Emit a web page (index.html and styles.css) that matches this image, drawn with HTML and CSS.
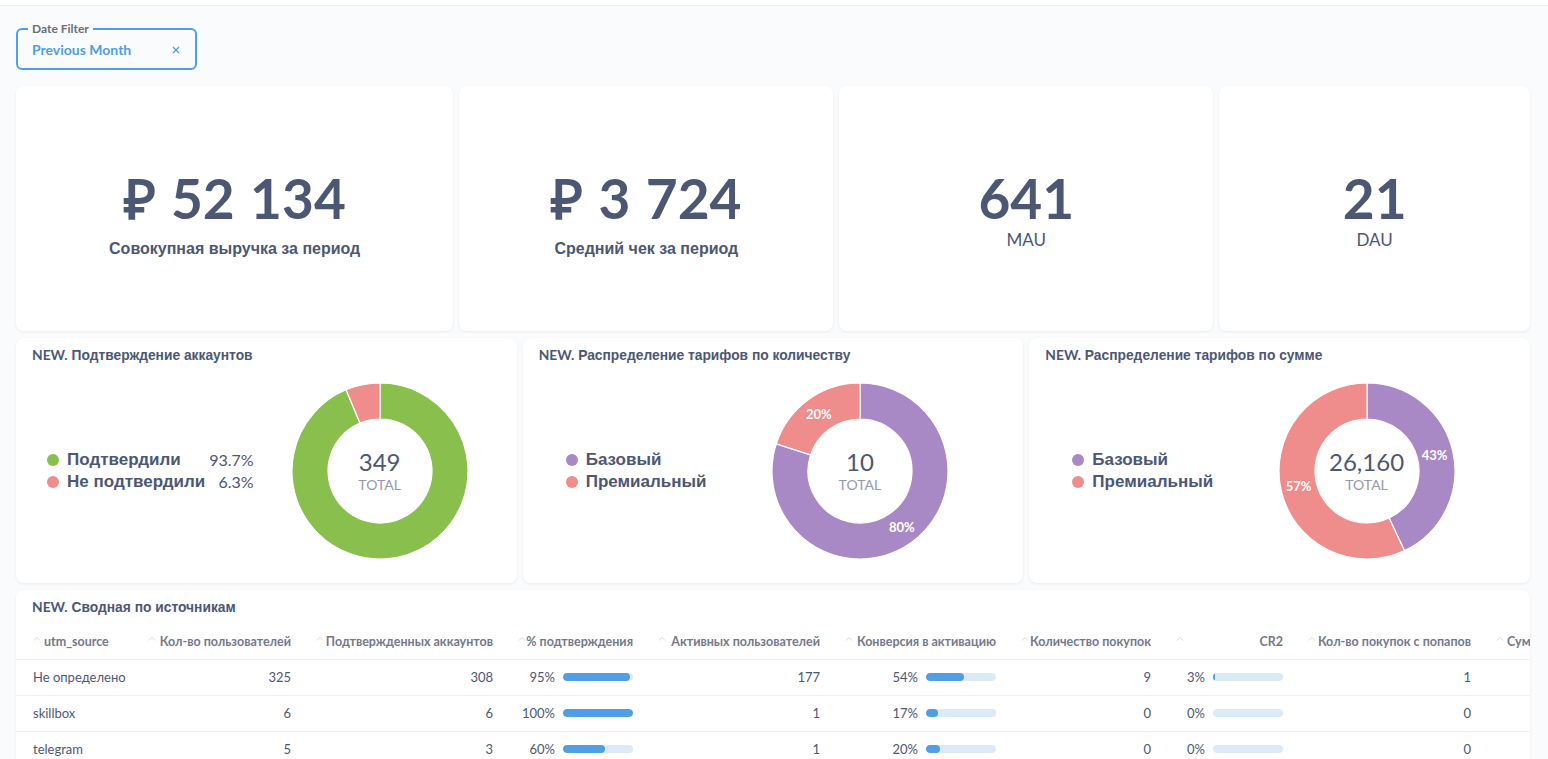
FILE: index.html
```html
<!DOCTYPE html>
<html lang="ru">
<head>
<meta charset="utf-8">
<title>Dashboard</title>
<link rel="stylesheet" href="styles.css">
</head>
<body>
<div class="topbar"></div>

<div class="filters">
  <fieldset class="filter">
    <legend class="filter-legend">Date Filter</legend>
    <div class="filter-row">
      <span class="filter-value">Previous Month</span>
      <svg class="filter-close" width="8" height="8" viewBox="0 0 8 8"><path d="M1 1 L7 7 M7 1 L1 7" stroke="#509ee3" stroke-width="1.3" fill="none"/></svg>
    </div>
  </fieldset>
</div>

<main class="dashboard">
  <section class="card scalar span-7">
    <div class="scalar-value">₽ 52 134</div>
    <div class="scalar-label scalar-label--ru">Совокупная выручка за период</div>
  </section>
  <section class="card scalar span-6">
    <div class="scalar-value">₽ 3 724</div>
    <div class="scalar-label scalar-label--ru">Средний чек за период</div>
  </section>
  <section class="card scalar span-6">
    <div class="scalar-value">641</div>
    <div class="scalar-label">MAU</div>
  </section>
  <section class="card scalar span-5">
    <div class="scalar-value">21</div>
    <div class="scalar-label">DAU</div>
  </section>

  <section class="card chart-card span-8">
    <h2 class="card-title"><span class="title-tag">NEW.</span> Подтверждение аккаунтов</h2>
    <div class="chart-body">
      <div class="legend legend--first">
        <span class="dot dot-green"></span><span class="legend-name">Подтвердили</span><span class="legend-pct">93.7%</span>
        <span class="dot dot-pink"></span><span class="legend-name">Не подтвердили</span><span class="legend-pct">6.3%</span>
      </div>
      <div class="chart-area">
        <div class="donut">
          <svg class="donut-svg" width="180" height="180" viewBox="0 0 180 180">
            <path d="M90 2 A88 88 0 1 1 56.07 8.80 L69.95 42.02 A52 52 0 1 0 90 38 Z" fill="#88bf4d" stroke="#fff" stroke-width="1.2"/>
            <path d="M56.07 8.80 A88 88 0 0 1 90 2 L90 38 A52 52 0 0 0 69.95 42.02 Z" fill="#ef8c8c" stroke="#fff" stroke-width="1.2"/>
          </svg>
          <div class="donut-center">
            <div class="donut-total">349</div>
            <div class="donut-caption">TOTAL</div>
          </div>
        </div>
      </div>
    </div>
  </section>

  <section class="card chart-card span-8">
    <h2 class="card-title"><span class="title-tag">NEW.</span> Распределение тарифов по количеству</h2>
    <div class="chart-body">
      <div class="legend">
        <span class="dot dot-purple"></span><span class="legend-name">Базовый</span><span class="legend-pct"></span>
        <span class="dot dot-pink"></span><span class="legend-name">Премиальный</span><span class="legend-pct"></span>
      </div>
      <div class="chart-area">
        <div class="donut">
          <svg class="donut-svg" width="180" height="180" viewBox="0 0 180 180">
            <path d="M90 2 A88 88 0 1 1 6.30 62.81 L40.54 73.93 A52 52 0 1 0 90 38 Z" fill="#a989c5" stroke="#fff" stroke-width="1.2"/>
            <path d="M6.30 62.81 A88 88 0 0 1 90 2 L90 38 A52 52 0 0 0 40.54 73.93 Z" fill="#ef8c8c" stroke="#fff" stroke-width="1.2"/>
          </svg>
          <div class="donut-center">
            <div class="donut-total">10</div>
            <div class="donut-caption">TOTAL</div>
          </div>
          <span class="slice-label" style="left:49px;top:33px">20%</span>
          <span class="slice-label" style="left:132px;top:146px">80%</span>
        </div>
      </div>
    </div>
  </section>

  <section class="card chart-card span-8">
    <h2 class="card-title"><span class="title-tag">NEW.</span> Распределение тарифов по сумме</h2>
    <div class="chart-body">
      <div class="legend">
        <span class="dot dot-purple"></span><span class="legend-name">Базовый</span><span class="legend-pct"></span>
        <span class="dot dot-pink"></span><span class="legend-name">Премиальный</span><span class="legend-pct"></span>
      </div>
      <div class="chart-area">
        <div class="donut">
          <svg class="donut-svg" width="180" height="180" viewBox="0 0 180 180">
            <path d="M90 2 A88 88 0 0 1 127.47 169.62 L112.14 137.05 A52 52 0 0 0 90 38 Z" fill="#a989c5" stroke="#fff" stroke-width="1.2"/>
            <path d="M127.47 169.62 A88 88 0 1 1 90 2 L90 38 A52 52 0 1 0 112.14 137.05 Z" fill="#ef8c8c" stroke="#fff" stroke-width="1.2"/>
          </svg>
          <div class="donut-center">
            <div class="donut-total">26,160</div>
            <div class="donut-caption">TOTAL</div>
          </div>
          <span class="slice-label" style="left:158px;top:74px">43%</span>
          <span class="slice-label" style="left:22px;top:105px">57%</span>
        </div>
      </div>
    </div>
  </section>

  <section class="card table-card span-24">
    <h2 class="card-title"><span class="title-tag">NEW.</span> Сводная по источникам</h2>
    <div class="table">
      <div class="tr th-row">
        <div class="th th-left"><svg class="caret" width="8" height="5" viewBox="0 0 8 5"><path d="M1 4.5 L4 1.5 L7 4.5" fill="none" stroke="#d3d7de" stroke-width="1"/></svg><span>utm_source</span></div>
        <div class="th"><svg class="caret" width="8" height="5" viewBox="0 0 8 5"><path d="M1 4.5 L4 1.5 L7 4.5" fill="none" stroke="#d3d7de" stroke-width="1"/></svg><span>Кол-во пользователей</span></div>
        <div class="th"><svg class="caret" width="8" height="5" viewBox="0 0 8 5"><path d="M1 4.5 L4 1.5 L7 4.5" fill="none" stroke="#d3d7de" stroke-width="1"/></svg><span>Подтвержденных аккаунтов</span></div>
        <div class="th"><svg class="caret" width="8" height="5" viewBox="0 0 8 5"><path d="M1 4.5 L4 1.5 L7 4.5" fill="none" stroke="#d3d7de" stroke-width="1"/></svg><span>% подтверждения</span></div>
        <div class="th"><svg class="caret" width="8" height="5" viewBox="0 0 8 5"><path d="M1 4.5 L4 1.5 L7 4.5" fill="none" stroke="#d3d7de" stroke-width="1"/></svg><span>Активных пользователей</span></div>
        <div class="th"><svg class="caret" width="8" height="5" viewBox="0 0 8 5"><path d="M1 4.5 L4 1.5 L7 4.5" fill="none" stroke="#d3d7de" stroke-width="1"/></svg><span>Конверсия в активацию</span></div>
        <div class="th"><svg class="caret" width="8" height="5" viewBox="0 0 8 5"><path d="M1 4.5 L4 1.5 L7 4.5" fill="none" stroke="#d3d7de" stroke-width="1"/></svg><span>Количество покупок</span></div>
        <div class="th"><svg class="caret" width="8" height="5" viewBox="0 0 8 5"><path d="M1 4.5 L4 1.5 L7 4.5" fill="none" stroke="#d3d7de" stroke-width="1"/></svg><span>CR2</span></div>
        <div class="th"><svg class="caret" width="8" height="5" viewBox="0 0 8 5"><path d="M1 4.5 L4 1.5 L7 4.5" fill="none" stroke="#d3d7de" stroke-width="1"/></svg><span>Кол-во покупок с попапов</span></div>
        <div class="th th-left"><svg class="caret" width="8" height="5" viewBox="0 0 8 5"><path d="M1 4.5 L4 1.5 L7 4.5" fill="none" stroke="#d3d7de" stroke-width="1"/></svg><span>Сум</span></div>
      </div>

      <div class="tr">
        <div class="td td-left">Не определено</div>
        <div class="td">325</div>
        <div class="td">308</div>
        <div class="td td-bar"><span>95%</span><span class="bar"><span class="bar-fill" style="width:95%"></span></span></div>
        <div class="td">177</div>
        <div class="td td-bar"><span>54%</span><span class="bar"><span class="bar-fill" style="width:54%"></span></span></div>
        <div class="td">9</div>
        <div class="td td-bar"><span>3%</span><span class="bar"><span class="bar-fill" style="width:3%"></span></span></div>
        <div class="td">1</div>
        <div class="td"></div>
      </div>

      <div class="tr">
        <div class="td td-left">skillbox</div>
        <div class="td">6</div>
        <div class="td">6</div>
        <div class="td td-bar"><span>100%</span><span class="bar"><span class="bar-fill" style="width:100%"></span></span></div>
        <div class="td">1</div>
        <div class="td td-bar"><span>17%</span><span class="bar"><span class="bar-fill" style="width:17%"></span></span></div>
        <div class="td">0</div>
        <div class="td td-bar"><span>0%</span><span class="bar"><span class="bar-fill" style="width:0%"></span></span></div>
        <div class="td">0</div>
        <div class="td"></div>
      </div>

      <div class="tr">
        <div class="td td-left">telegram</div>
        <div class="td">5</div>
        <div class="td">3</div>
        <div class="td td-bar"><span>60%</span><span class="bar"><span class="bar-fill" style="width:60%"></span></span></div>
        <div class="td">1</div>
        <div class="td td-bar"><span>20%</span><span class="bar"><span class="bar-fill" style="width:20%"></span></span></div>
        <div class="td">0</div>
        <div class="td td-bar"><span>0%</span><span class="bar"><span class="bar-fill" style="width:0%"></span></span></div>
        <div class="td">0</div>
        <div class="td"></div>
      </div>
    </div>
  </section>
</main>
</body>
</html>
```

FILE: styles.css
```css
* { box-sizing: border-box; }

html, body {
  margin: 0;
  padding: 0;
}

body {
  background: #f9fbfc;
  font-family: Lato, "Liberation Sans", sans-serif;
  color: #4c5773;
  overflow: hidden;
  height: 759px;
}

.topbar {
  height: 6px;
  background: #fff;
  border-bottom: 1px solid #eceef1;
}

.filters {
  padding: 16px 16px 0;
}

.filter {
  margin: 0;
  width: 181px;
  height: 48px;
  border: 2px solid #509ee3;
  border-radius: 6px;
  padding: 0 14px;
  min-width: 0;
}

.filter-legend {
  padding: 0 4px;
  margin-left: -4px;
  font-size: 12px;
  line-height: 14px;
  font-weight: 700;
  color: #696e7b;
}

.filter-row {
  display: flex;
  align-items: center;
  justify-content: space-between;
  padding: 4px 1px 0 0;
  height: 24px;
}

.filter-value {
  font-size: 14px;
  font-weight: 700;
  color: #509ee3;
  line-height: 18px;
}

.filter-close {
  display: block;
}

.dashboard {
  display: grid;
  grid-template-columns: repeat(24, minmax(0, 1fr));
  grid-template-rows: 245px 245px 300px;
  column-gap: 6px;
  row-gap: 7px;
  padding: 0 18px 0 16px;
  margin-top: 16px;
}

.span-5 { grid-column: span 5; }
.span-6 { grid-column: span 6; }
.span-7 { grid-column: span 7; }
.span-8 { grid-column: span 8; }
.span-24 { grid-column: span 24; }

.card {
  background: #fff;
  border-radius: 8px;
  box-shadow: 0 1px 3px rgba(0, 0, 0, 0.07);
  overflow: hidden;
}

/* Scalars */
.scalar {
  display: flex;
  flex-direction: column;
  align-items: center;
  padding-top: 82px;
}

.scalar-value {
  font-size: 55px;
  line-height: 60px;
  font-weight: 700;
  color: #4c5773;
  white-space: nowrap;
  word-spacing: 2px;
}

.scalar-label {
  margin-top: 2px;
  font-size: 17px;
  line-height: 20px;
  color: #4c5773;
}

.scalar-label--ru {
  margin-top: 11px;
  font-family: "Liberation Sans", Lato, sans-serif;
  font-size: 16px;
  font-weight: 700;
}

/* Charts */
.card-title {
  margin: 0;
  padding: 9px 16px 0;
  font-family: "Liberation Sans", Lato, sans-serif;
  font-size: 13.8px;
  line-height: 16px;
  font-weight: 700;
  color: #4c5773;
  white-space: nowrap;
}

.title-tag {
  font-family: Lato, sans-serif;
}

.chart-card {
  display: flex;
  flex-direction: column;
}

.chart-body {
  flex: 1;
  display: flex;
  align-items: center;
  padding: 0 0 6px 43px;
}

.legend {
  display: grid;
  grid-template-columns: 12px auto auto;
  column-gap: 8px;
  align-items: center;
  font-size: 17px;
  line-height: 22px;
}

.legend--first {
  margin: 0 7px 0 -12px;
}

.dot {
  width: 12px;
  height: 12px;
  border-radius: 50%;
}

.dot-green { background: #88bf4d; }
.dot-pink { background: #ef8c8c; }
.dot-purple { background: #a989c5; }

.legend-name {
  font-family: "Liberation Sans", Lato, sans-serif;
  font-weight: 700;
  color: #4c5773;
  white-space: nowrap;
}

.legend-pct {
  margin-left: -4px;
  text-align: right;
  font-size: 16px;
  color: #4c5773;
}

.chart-area {
  flex: 1;
  display: flex;
  justify-content: center;
  padding-right: 18px;
}

.donut {
  position: relative;
  display: grid;
  width: 180px;
  height: 180px;
}

.donut-svg {
  grid-area: 1 / 1;
  display: block;
}

.donut-center {
  grid-area: 1 / 1;
  display: flex;
  flex-direction: column;
  align-items: center;
  justify-content: center;
  padding-top: 2px;
}

.donut-total {
  font-size: 24px;
  line-height: 26px;
  color: #4c5773;
}

.donut-caption {
  margin-top: 1px;
  font-size: 14px;
  line-height: 18px;
  color: #949aab;
}

.slice-label {
  position: absolute;
  transform: translate(-50%, -50%);
  font-size: 13px;
  font-weight: 700;
  color: #fff;
  white-space: nowrap;
}

/* Table */
.table-card .card-title {
  margin-bottom: 8px;
}

.tr {
  display: grid;
  grid-template-columns: 90px 143px 177px 115px 162px 151px 130px 107px 163px 140px;
  column-gap: 25px;
  padding-left: 17px;
  height: 36px;
  align-items: center;
  border-bottom: 1px solid #f0f1f3;
  font-size: 13px;
  white-space: nowrap;
}

.th-row {
  height: 36px;
}

.th {
  display: flex;
  align-items: center;
  justify-content: flex-end;
  font-size: 12.5px;
  font-weight: 700;
  color: #74798a;
}

.th .caret {
  margin-right: auto;
}

.th-left {
  justify-content: flex-start;
}

.th-left .caret {
  margin-right: 3px;
}

.caret {
  display: block;
  margin: 0 3px 7px 0;
  flex: none;
}

.td {
  text-align: right;
  color: #4c5773;
  padding-bottom: 1px;
}

.td-left {
  text-align: left;
}

.td-bar {
  display: flex;
  align-items: center;
  justify-content: flex-end;
  gap: 8px;
}

.bar {
  display: block;
  width: 70px;
  height: 8px;
  border-radius: 4px;
  background: #dceaf8;
  overflow: hidden;
}

.bar-fill {
  display: block;
  height: 100%;
  min-width: 0;
  border-radius: 4px;
  background: #509ee3;
}
```
